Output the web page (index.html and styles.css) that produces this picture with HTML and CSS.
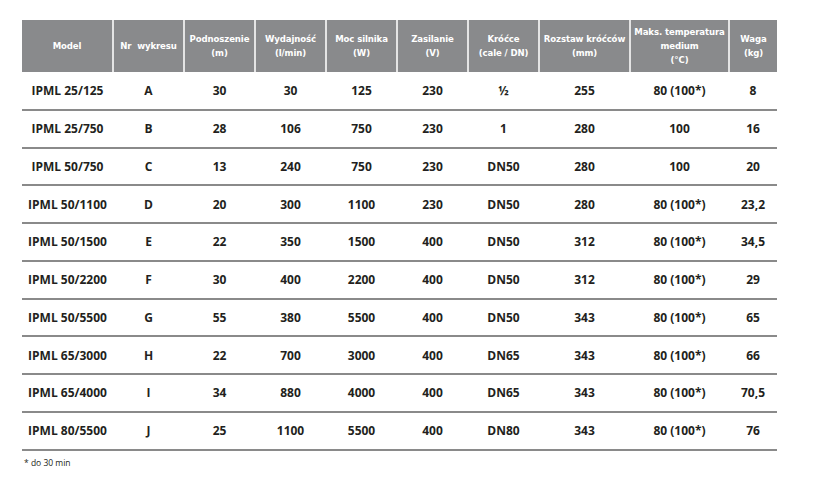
FILE: index.html
```html
<!DOCTYPE html>
<html lang="pl">
<head>
<meta charset="utf-8">
<title>IPML</title>
<link rel="stylesheet" href="styles.css">
</head>
<body>
<div class="page">
<table class="spec">
<colgroup>
<col class="c-model"><col class="c-std"><col class="c-std"><col class="c-std"><col class="c-std"><col class="c-std"><col class="c-std"><col class="c-wide"><col class="c-temp"><col class="c-kg">
</colgroup>
<thead>
<tr>
<th>Model</th>
<th>Nr&nbsp; wykresu</th>
<th>Podnoszenie<br>(m)</th>
<th>Wydajność<br>(l/min)</th>
<th>Moc silnika<br>(W)</th>
<th>Zasilanie<br>(V)</th>
<th>Króćce<br>(cale / DN)</th>
<th>Rozstaw króćców<br>(mm)</th>
<th>Maks. temperatura<br>medium<br>(°C)</th>
<th>Waga<br>(kg)</th>
</tr>
</thead>
<tbody>
<tr><td>IPML 25/125</td><td>A</td><td>30</td><td>30</td><td>125</td><td>230</td><td>½</td><td>255</td><td>80 (100*)</td><td>8</td></tr>
<tr><td>IPML 25/750</td><td>B</td><td>28</td><td>106</td><td>750</td><td>230</td><td>1</td><td>280</td><td>100</td><td>16</td></tr>
<tr><td>IPML 50/750</td><td>C</td><td>13</td><td>240</td><td>750</td><td>230</td><td>DN50</td><td>280</td><td>100</td><td>20</td></tr>
<tr><td>IPML 50/1100</td><td>D</td><td>20</td><td>300</td><td>1100</td><td>230</td><td>DN50</td><td>280</td><td>80 (100*)</td><td>23,2</td></tr>
<tr><td>IPML 50/1500</td><td>E</td><td>22</td><td>350</td><td>1500</td><td>400</td><td>DN50</td><td>312</td><td>80 (100*)</td><td>34,5</td></tr>
<tr><td>IPML 50/2200</td><td>F</td><td>30</td><td>400</td><td>2200</td><td>400</td><td>DN50</td><td>312</td><td>80 (100*)</td><td>29</td></tr>
<tr><td>IPML 50/5500</td><td>G</td><td>55</td><td>380</td><td>5500</td><td>400</td><td>DN50</td><td>343</td><td>80 (100*)</td><td>65</td></tr>
<tr><td>IPML 65/3000</td><td>H</td><td>22</td><td>700</td><td>3000</td><td>400</td><td>DN65</td><td>343</td><td>80 (100*)</td><td>66</td></tr>
<tr><td>IPML 65/4000</td><td>I</td><td>34</td><td>880</td><td>4000</td><td>400</td><td>DN65</td><td>343</td><td>80 (100*)</td><td>70,5</td></tr>
<tr><td>IPML 80/5500</td><td>J</td><td>25</td><td>1100</td><td>5500</td><td>400</td><td>DN80</td><td>343</td><td>80 (100*)</td><td>76</td></tr>
</tbody>
</table>
<p class="note">* do 30 min</p>
</div>
</body>
</html>
```

FILE: styles.css
```css
html, body {
  margin: 0;
  padding: 0;
  background: #ffffff;
}

.page {
  padding: 20px 0 0 22px;
  font-family: "Open Sans", "Liberation Sans", sans-serif;
  color: #231f20;
}

.spec {
  border-collapse: collapse;
  table-layout: fixed;
  width: 754px;
}

.c-model { width: 91px; }
.c-std { width: 71px; }
.c-wide { width: 91px; }
.c-temp { width: 99px; }
.c-kg { width: 48px; }

.spec th {
  background: #898a8c;
  color: #ffffff;
  font-family: "DejaVu Sans Condensed", "Roboto", sans-serif;
  font-weight: 700;
  font-size: 9.5px;
  line-height: 14px;
  letter-spacing: -0.1px;
  height: 52px;
  padding: 0;
  box-sizing: border-box;
  text-align: center;
  vertical-align: middle;
  white-space: nowrap;
  border-left: 2px solid #e4e4e4;
}

.spec th:first-child {
  border-left: none;
}

.spec td {
  height: 37.75px;
  padding: 0;
  box-sizing: border-box;
  font-size: 12px;
  font-weight: 700;
  text-align: center;
  vertical-align: middle;
  border-bottom: 2px solid #8a8a8a;
  white-space: nowrap;
}

.note {
  margin: 6px 0 0 2px;
  font-size: 8.5px;
  color: #231f20;
}
```
